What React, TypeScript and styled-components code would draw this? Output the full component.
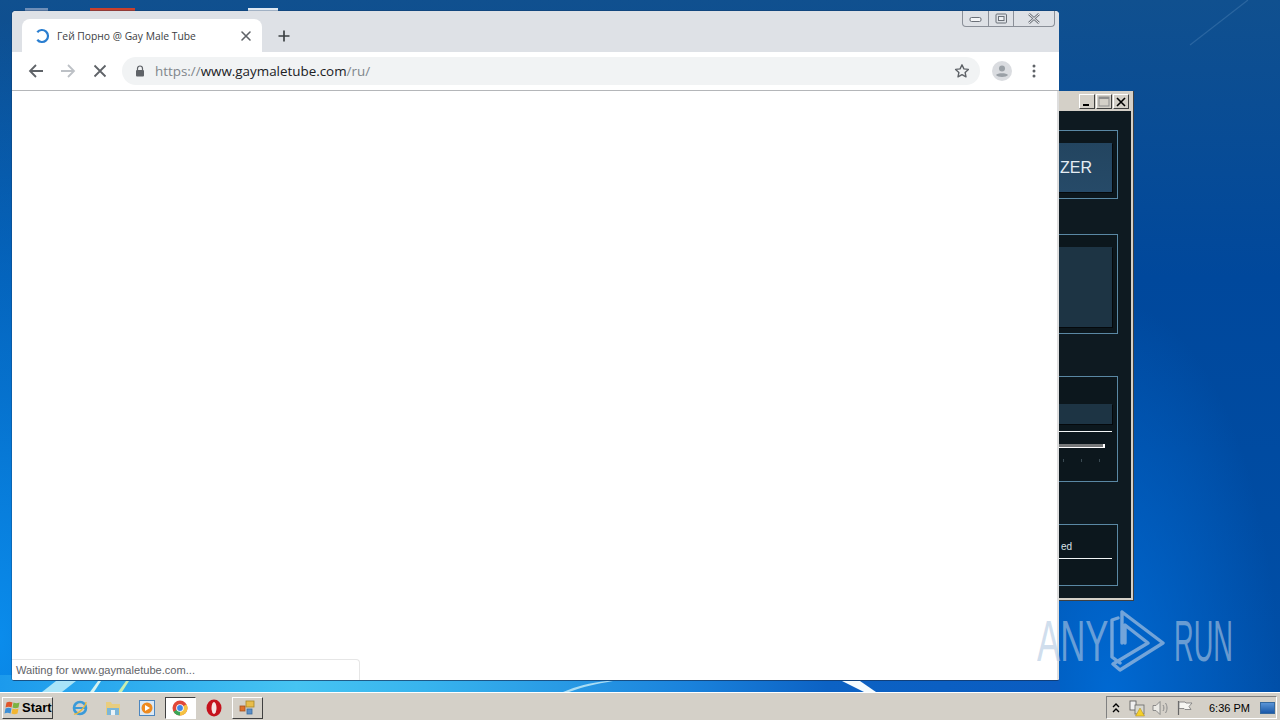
import * as React from 'react'

import styled, { createGlobalStyle } from 'styled-components'

const Global = createGlobalStyle`
  html, body {
    margin: 0;
    padding: 0;
    width: 1280px;
    height: 720px;
    overflow: hidden;
  }
  * {
    box-sizing: border-box;
  }
`

const Screen = styled.div`
  width: 1280px;
  height: 720px;
  display: flex;
  flex-direction: column;
  font-family: 'Open Sans', 'Liberation Sans', sans-serif;
`

const Desktop = styled.div`
  position: relative;
  flex: 1;
  overflow: hidden;
  background:
    radial-gradient(ellipse 170px 400px at 1110px 700px, rgba(0, 108, 215, 0.9), rgba(0, 100, 200, 0) 100%),
    radial-gradient(ellipse 260px 620px at 0 640px, #0a8cec, rgba(10, 120, 220, 0) 100%),
    linear-gradient(180deg, #10508f 0%, #00489c 40%, #004fa8 100%);
`

const Wallpaper = styled.svg`
  position: absolute;
  left: 0;
  top: 0;
`

const DesktopIconEdge = styled.div<{ $left: number; $width: number; $color: string }>`
  position: absolute;
  top: 8px;
  left: ${p => p.$left}px;
  width: ${p => p.$width}px;
  height: 4px;
  background: ${p => p.$color};
`

const ChromeWindow = styled.div`
  position: absolute;
  left: 12px;
  top: 11px;
  width: 1047px;
  height: 669px;
  display: flex;
  flex-direction: column;
  border-radius: 4px 4px 2px 2px;
  overflow: hidden;
  background: #fff;
  box-shadow: 0 1px 0 rgba(20, 50, 90, 0.7), -1px 0 0 rgba(20, 50, 90, 0.3), 0 -1px 0 rgba(20, 50, 90, 0.3);
`

const TabStrip = styled.div`
  position: relative;
  height: 41px;
  flex: none;
  display: flex;
  align-items: flex-end;
  padding-left: 10px;
  background: #dee1e6;
`

const Tab = styled.div`
  width: 240px;
  height: 33px;
  display: flex;
  align-items: center;
  gap: 7px;
  padding: 0 10px 0 12px;
  background: #fff;
  border-radius: 8px 8px 0 0;
`

const TabTitle = styled.span`
  flex: 1;
  font-size: 10.3px;
  color: #3c4043;
  white-space: nowrap;
`

const NewTab = styled.div`
  width: 44px;
  height: 33px;
  display: flex;
  align-items: center;
  justify-content: center;
`

const Caption = styled.div`
  position: absolute;
  top: 0;
  right: 4px;
  width: 93px;
  height: 16px;
  display: flex;
  border: 1px solid #8a8f98;
  border-top: none;
  border-radius: 0 0 4px 4px;
`

const CaptionButton = styled.div<{ $width: number }>`
  width: ${p => p.$width}px;
  display: flex;
  align-items: center;
  justify-content: center;
  & + & {
    border-left: 1px solid #8a8f98;
  }
`

const Toolbar = styled.div`
  height: 39px;
  flex: none;
  display: flex;
  align-items: center;
  padding: 0 8px 1px 8px;
  background: #fff;
  border-bottom: 1px solid #b4b6b9;
`

const NavButton = styled.div`
  width: 32px;
  height: 28px;
  display: flex;
  align-items: center;
  justify-content: center;
`

const Omnibox = styled.div`
  width: 858px;
  height: 28px;
  margin-left: 6px;
  display: flex;
  align-items: center;
  padding: 0 10px 0 13px;
  background: #f1f3f4;
  border-radius: 14px;
`

const Url = styled.span`
  flex: 1;
  margin-left: 10px;
  font-size: 13.4px;
  color: #80868b;
  white-space: nowrap;
`

const UrlHost = styled.span`
  color: #202124;
`

const ToolbarEnd = styled.div`
  flex: 1;
  display: flex;
  align-items: center;
  justify-content: space-between;
  padding: 0 15px 0 12px;
`

const Page = styled.div`
  position: relative;
  flex: 1;
  background: #fff;
  border-right: 2px solid #dedede;
`

const StatusBubble = styled.div`
  position: absolute;
  left: 0;
  bottom: 0;
  width: 348px;
  height: 21px;
  display: flex;
  align-items: center;
  padding-left: 4px;
  font-family: 'Liberation Sans', sans-serif;
  font-size: 11.1px;
  color: #5f6368;
  background: #fff;
  border: 1px solid #e6e6e6;
  border-left: none;
  border-bottom: none;
  border-radius: 0 4px 0 0;
`

const AppWindow = styled.div`
  position: absolute;
  left: 1040px;
  top: 91px;
  width: 94px;
  height: 510px;
  display: flex;
  flex-direction: column;
  background: #d4d0c8;
  border-right: 1px solid #404040;
  border-bottom: 1px solid #404040;
  padding: 0 2px 2px 0;
`

const AppTitle = styled.div`
  height: 20px;
  flex: none;
  display: flex;
  justify-content: flex-end;
  align-items: center;
  gap: 1px;
  padding: 1px 2px 0 0;
`

const WinButton = styled.div`
  width: 16px;
  height: 15px;
  display: flex;
  align-items: center;
  justify-content: center;
  background: #d4d0c8;
  border: 1px solid;
  border-color: #fff #404040 #404040 #fff;
`

const AppBody = styled.div`
  flex: 1;
  display: flex;
  flex-direction: column;
  align-items: flex-end;
  padding: 19px 13px 0 0;
  background: #0e1a21;
`

const Group = styled.div<{ $height: number; $gap: number }>`
  width: 90px;
  height: ${p => p.$height}px;
  flex: none;
  margin-bottom: ${p => p.$gap}px;
  display: flex;
  flex-direction: column;
  align-items: flex-end;
  padding: 12px 5px 0 0;
  border: 1px solid #5a88a4;
  background: #0c171d;
`

const AppButton = styled.div<{ $height: number }>`
  width: 90px;
  height: ${p => p.$height}px;
  flex: none;
  display: flex;
  align-items: center;
  justify-content: flex-end;
  padding-right: 20px;
  font-family: 'Liberation Sans', sans-serif;
  font-size: 16px;
  color: #e4edf3;
  background: #1d3444;
  box-shadow: 1px 1px 0 #05090c;
`

const BlueButton = styled(AppButton)`
  background: linear-gradient(180deg, #234560, #264a68);
`

const BarButton = styled(AppButton)`
  margin: 15px 0 7px;
`

const TrackGroup = styled.div`
  width: 100%;
  display: flex;
  flex-direction: column;
  align-items: flex-end;
`

const Rule = styled.div`
  width: 90px;
  height: 1px;
  background: #f2f5f6;
`

const Slider = styled.div`
  width: 82px;
  height: 4px;
  margin: 12px 7px 0 0;
  background: #77797a;
  border-right: 2px solid #fff;
  border-bottom: 1px solid #fff;
`

const Ticks = styled.div`
  width: 60px;
  display: flex;
  justify-content: flex-end;
  gap: 17px;
  margin: 11px 12px 0 0;
`

const Tick = styled.span`
  width: 1px;
  height: 3px;
  background: #3a4a52;
`

const CheckLabel = styled.div`
  width: 90px;
  height: 33px;
  display: flex;
  align-items: center;
  justify-content: flex-end;
  padding-right: 40px;
  margin-top: -12px;
  padding-top: 10px;
  font-family: 'Liberation Sans', sans-serif;
  font-size: 10px;
  color: #d8e2e8;
`

const Watermark = styled.div`
  position: absolute;
  left: 1037px;
  top: 609px;
  display: flex;
  align-items: center;
  font-family: 'Liberation Sans', sans-serif;
  font-size: 58px;
  line-height: 62px;
  color: rgba(176, 200, 226, 0.6);
`

const WatermarkWord = styled.span<{ $box: number; $scale: number; $offset?: number }>`
  display: block;
  width: ${p => p.$box}px;
  margin-left: ${p => p.$offset || 0}px;
  transform: scaleX(${p => p.$scale});
  transform-origin: left center;
  white-space: nowrap;
`

const Taskbar = styled.div`
  height: 28px;
  flex: none;
  display: flex;
  align-items: center;
  padding: 2px 0 0 2px;
  background: #d4d0c8;
  border-top: 1px solid #fff;
`

const StartButton = styled.div`
  width: 51px;
  height: 22px;
  display: flex;
  align-items: center;
  padding-left: 1px;
  font-family: 'Liberation Sans', sans-serif;
  font-size: 13px;
  font-weight: 700;
  color: #000;
  border: 1px solid;
  border-color: #fff #404040 #404040 #fff;
`

const QuickLaunch = styled.div`
  display: flex;
  align-items: center;
  margin-left: 10px;
`

const TaskIcon = styled.div<{ $active?: boolean; $boxed?: boolean }>`
  width: ${p => (p.$active || p.$boxed ? 31 : 33.5)}px;
  height: 22px;
  display: flex;
  align-items: center;
  justify-content: center;
  ${p => (p.$active || p.$boxed) && 'margin: 0 1.25px;'}
  ${p => p.$active && 'background: #fff; border: 1px solid; border-color: #404040 #fff #fff #404040;'}
  ${p => p.$boxed && 'border: 1px solid; border-color: #fff #404040 #404040 #fff;'}
`

const Tray = styled.div`
  margin-left: auto;
  margin-right: 3px;
  width: 171px;
  height: 23px;
  display: flex;
  align-items: center;
  padding-left: 0;
  border: 1px solid;
  border-color: #808080 #fff #fff #808080;
`

const TrayIcon = styled.div<{ $width: number }>`
  width: ${p => p.$width}px;
  height: 18px;
  display: flex;
  align-items: center;
  justify-content: center;
`

const Clock = styled.span`
  margin-left: 12px;
  font-family: 'Liberation Sans', sans-serif;
  font-size: 11px;
  color: #000;
  white-space: nowrap;
`

const ShowDesktop = styled.div`
  width: 15px;
  height: 12px;
  margin-left: auto;
  margin-right: 1px;
  background: linear-gradient(180deg, #5a94d6, #1a58a8);
  border: 1px solid #34689f;
`

const Stroke = { fill: 'none', strokeLinecap: 'round', strokeLinejoin: 'round' } as const

export default function App() {
  return (
    <Screen>
      <Global />
      <Desktop>
        <Wallpaper width="1280" height="692" viewBox="0 0 1280 692">
          <defs>
            <linearGradient id="glow" x1="0" x2="1" y1="0" y2="0">
              <stop offset="0" stopColor="#1c9aec" />
              <stop offset="0.28" stopColor="#46c4f2" />
              <stop offset="0.4" stopColor="#38b4ee" />
              <stop offset="0.65" stopColor="#1a82dc" />
              <stop offset="0.78" stopColor="#0c62c4" />
              <stop offset="1" stopColor="#0a5cc0" />
            </linearGradient>
          </defs>
          <rect x="0" y="675" width="1060" height="17" fill="url(#glow)" />
          <path d="M42 692l14-11h20l-14 11z" fill="#a8e4f8" />
          <path d="M90 692l8-11h3l-7 11z" fill="#d4f2f0" />
          <path d="M118 692l8-11h3l-7 11z" fill="#c8eeb0" />
          <path d="M563 692c14-6 26-9 44-11h6c-18 3-30 6-44 11z" fill="#a8dcf4" />
          <path d="M842 681h18l16 11h-12z" fill="#f4fbfe" />
          <path d="M1248 0L1190 45" stroke="rgba(150,190,225,0.2)" strokeWidth="1.2" fill="none" />
        </Wallpaper>
        <DesktopIconEdge $left={25} $width={23} $color="#6f8fb8" />
        <DesktopIconEdge $left={90} $width={45} $color="#c8402c" />
        <DesktopIconEdge $left={248} $width={30} $color="#dfe8f2" />

        <AppWindow>
          <AppTitle>
            <WinButton>
              <svg width="10" height="10" viewBox="0 0 10 10">
                <rect x="1" y="7" width="6" height="2" fill="#000" />
              </svg>
            </WinButton>
            <WinButton>
              <svg width="12" height="11" viewBox="0 0 12 11">
                <rect x="1" y="1" width="10" height="9" fill="none" stroke="#8d8d8d" strokeWidth="1" />
                <rect x="1" y="1" width="10" height="2" fill="#8d8d8d" />
              </svg>
            </WinButton>
            <WinButton>
              <svg width="10" height="10" viewBox="0 0 10 10">
                <path d="M1 1l8 8M9 1l-8 8" stroke="#000" strokeWidth="1.6" fill="none" />
              </svg>
            </WinButton>
          </AppTitle>
          <AppBody>
            <Group $height={69} $gap={35}>
              <BlueButton $height={49}>ZER</BlueButton>
            </Group>
            <Group $height={100} $gap={42}>
              <AppButton $height={80} />
            </Group>
            <Group $height={106} $gap={42}>
              <TrackGroup>
                <BarButton $height={20} />
                <Rule />
                <Slider />
                <Ticks>
                  <Tick />
                  <Tick />
                  <Tick />
                </Ticks>
              </TrackGroup>
            </Group>
            <Group $height={62} $gap={0}>
              <CheckLabel>ed</CheckLabel>
              <Rule />
            </Group>
          </AppBody>
        </AppWindow>

        <ChromeWindow>
          <TabStrip>
            <Tab>
              <svg width="16" height="16" viewBox="0 0 16 16">
                <path d="M3.300 4.300A6 6 0 1 1 3.300 11.700" stroke="#2a7ed0" strokeWidth="2.200" fill="none" />
              </svg>
              <TabTitle>Гей Порно @ Gay Male Tube</TabTitle>
              <svg width="12" height="12" viewBox="0 0 12 12">
                <path d="M2 2l8 8M10 2l-8 8" stroke="#5f6368" strokeWidth="1.6" {...Stroke} />
              </svg>
            </Tab>
            <NewTab>
              <svg width="14" height="14" viewBox="0 0 14 14">
                <path d="M7 1.500v11M1.500 7h11" stroke="#3c4043" strokeWidth="1.7" fill="none" />
              </svg>
            </NewTab>
            <Caption>
              <CaptionButton $width={25}>
                <svg width="14" height="8" viewBox="0 0 14 8">
                  <rect x="1" y="2.500" width="11" height="4" rx="1.500" fill="#f4f5f7" stroke="#6b7078" strokeWidth="1" />
                </svg>
              </CaptionButton>
              <CaptionButton $width={25}>
                <svg width="13" height="11" viewBox="0 0 13 11">
                  <rect x="1" y="1" width="10.500" height="9" rx="1" fill="none" stroke="#6b7078" strokeWidth="1" />
                  <rect x="3.500" y="3.500" width="5.500" height="4" fill="#eef0f2" stroke="#6b7078" strokeWidth="1" />
                </svg>
              </CaptionButton>
              <CaptionButton $width={41}>
                <svg width="14" height="11" viewBox="0 0 14 11">
                  <path d="M2 1l10 9M12 1L2 10" stroke="#6b7078" strokeWidth="2.400" fill="none" />
                  <path d="M2 1l10 9M12 1L2 10" stroke="#f4f5f7" strokeWidth="1" fill="none" />
                </svg>
              </CaptionButton>
            </Caption>
          </TabStrip>

          <Toolbar>
            <NavButton>
              <svg width="16" height="16" viewBox="0 0 16 16">
                <path d="M15 8H2M8 2L2 8l6 6" stroke="#5f6368" strokeWidth="1.8" fill="none" />
              </svg>
            </NavButton>
            <NavButton>
              <svg width="16" height="16" viewBox="0 0 16 16">
                <path d="M1 8h13M8 2l6 6-6 6" stroke="#bdc1c6" strokeWidth="1.8" fill="none" />
              </svg>
            </NavButton>
            <NavButton>
              <svg width="14" height="14" viewBox="0 0 14 14">
                <path d="M1.500 1.500l11 11M12.500 1.500l-11 11" stroke="#5f6368" strokeWidth="1.8" fill="none" />
              </svg>
            </NavButton>
            <Omnibox>
              <svg width="10" height="12" viewBox="0 0 10 12">
                <path d="M2.500 5V3.500a2.500 2.500 0 0 1 5 0V5" stroke="#5f6368" strokeWidth="1.2" fill="none" />
                <rect x="1" y="5" width="8" height="6.500" rx="1" fill="#5f6368" />
              </svg>
              <Url>
                https://<UrlHost>www.gaymaletube.com</UrlHost>/ru/
              </Url>
              <svg width="16" height="16" viewBox="0 0 16 16">
                <path
                  d="M8 1.800l1.900 4.100 4.500.5-3.300 3 .9 4.400L8 11.600l-4 2.200.9-4.400-3.300-3 4.500-.5z"
                  stroke="#5f6368"
                  strokeWidth="1.4"
                  fill="none"
                  strokeLinejoin="round"
                />
              </svg>
            </Omnibox>
            <ToolbarEnd>
              <svg width="20" height="20" viewBox="0 0 20 20">
                <circle cx="10" cy="10" r="10" fill="#dadce0" />
                <circle cx="10" cy="7.500" r="3" fill="#9aa0a6" />
                <path d="M4 14c1.500-2.400 10.500-2.400 12 0-1.500 2.600-10.500 2.600-12 0z" fill="#9aa0a6" />
              </svg>
              <svg width="4" height="14" viewBox="0 0 4 14">
                <circle cx="2" cy="2" r="1.500" fill="#5f6368" />
                <circle cx="2" cy="7" r="1.500" fill="#5f6368" />
                <circle cx="2" cy="12" r="1.500" fill="#5f6368" />
              </svg>
            </ToolbarEnd>
          </Toolbar>

          <Page>
            <StatusBubble>Waiting for www.gaymaletube.com...</StatusBubble>
          </Page>
        </ChromeWindow>

        <Watermark>
          <WatermarkWord $box={71} $scale={0.6}>
            ANY
          </WatermarkWord>
          <svg width="58" height="63" viewBox="0 0 58 63">
            <path
              d="M10 9L4 11V48L12 54M14 3V34M14 3L55 34L12 61L5 55L40 34L17 16V34"
              stroke="rgba(176,200,226,0.65)"
              strokeWidth="3.4"
              fill="none"
              strokeLinejoin="round"
              strokeLinecap="round"
            />
          </svg>
          <WatermarkWord $box={60} $scale={0.47} $offset={8}>
            RUN
          </WatermarkWord>
        </Watermark>
      </Desktop>

      <Taskbar>
        <StartButton>
          <svg width="18" height="17" viewBox="0 0 17 17">
            <path d="M2 3.500c2-1 4-1 6 0l-1 5c-2-1-4-1-6 0z" fill="#e0562a" />
            <path d="M9 3.500c2 1 4 1 6 0l-1 5c-2 1-4 1-6 0z" fill="#7cb342" />
            <path d="M1 9.500c2-1 4-1 6 0l-1 5c-2-1-4-1-6 0z" fill="#3d8fd6" />
            <path d="M8 9.500c2 1 4 1 6 0l-1 5c-2 1-4 1-6 0z" fill="#f2b632" />
          </svg>
          Start
        </StartButton>
        <QuickLaunch>
          <TaskIcon>
            <svg width="18" height="18" viewBox="0 0 18 18">
              <circle cx="9" cy="9" r="6" fill="none" stroke="#3a9ad9" strokeWidth="2.600" />
              <path d="M3 9h12" stroke="#3a9ad9" strokeWidth="2" />
              <path d="M3 15C6 16 15 8 15 3" stroke="#e8b93a" strokeWidth="1.400" fill="none" />
            </svg>
          </TaskIcon>
          <TaskIcon>
            <svg width="18" height="18" viewBox="0 0 18 18">
              <path d="M2 3h5l1 2h8v11H2z" fill="#e9cd7e" />
              <rect x="3" y="9" width="12" height="7" fill="#7cb6d8" />
              <rect x="7" y="11" width="4" height="5" fill="#e9f3f8" />
            </svg>
          </TaskIcon>
          <TaskIcon>
            <svg width="16" height="16" viewBox="0 0 16 16">
              <rect x="0.500" y="0.500" width="15" height="15" fill="#dce9f5" stroke="#4c86bf" />
              <circle cx="8" cy="8" r="5.500" fill="#ee8a1f" />
              <path d="M6 5l5 3-5 3z" fill="#fff" />
            </svg>
          </TaskIcon>
          <TaskIcon $active>
            <svg width="16" height="16" viewBox="0 0 16 16">
              <circle cx="8" cy="8" r="7.500" fill="#e0483a" />
              <path d="M8 8L1.500 11.800A7.500 7.500 0 0 0 8 15.500z" fill="#3aa757" />
              <path d="M8 8l6.500-3.800A7.500 7.500 0 0 1 8 15.500z" fill="#f5c242" />
              <circle cx="8" cy="8" r="3.800" fill="#fff" />
              <circle cx="8" cy="8" r="2.900" fill="#3f86e8" />
            </svg>
          </TaskIcon>
          <TaskIcon>
            <svg width="16" height="18" viewBox="0 0 16 18">
              <ellipse cx="8" cy="9" rx="7.500" ry="8.500" fill="#c5111c" />
              <ellipse cx="8" cy="9" rx="2.500" ry="6" fill="#f6e3e3" />
            </svg>
          </TaskIcon>
          <TaskIcon $boxed>
            <svg width="17" height="15" viewBox="0 0 17 15">
              <rect x="7" y="1" width="8" height="6" fill="#e8bd4a" stroke="#a98524" strokeWidth="0.800" />
              <rect x="1" y="6" width="5" height="5" fill="#e0702c" stroke="#a6501e" strokeWidth="0.800" />
              <rect x="8" y="9" width="5" height="5" fill="#5c8fc7" stroke="#376a9f" strokeWidth="0.800" />
            </svg>
          </TaskIcon>
        </QuickLaunch>
        <Tray>
          <TrayIcon $width={18}>
            <svg width="8" height="10" viewBox="0 0 8 10">
              <path d="M1 4l3-3 3 3M1 9l3-3 3 3" stroke="#000" strokeWidth="1.400" fill="none" />
            </svg>
          </TrayIcon>
          <TrayIcon $width={24}>
            <svg width="18" height="18" viewBox="0 0 18 18">
              <rect x="2" y="2" width="6" height="9" fill="#f0f0f0" stroke="#555" strokeWidth="0.800" />
              <rect x="7" y="6" width="9" height="9" fill="#d8d8d0" stroke="#666" strokeWidth="0.800" />
              <path d="M12 9l4.500 8h-9z" fill="#f4cf2a" stroke="#a98524" strokeWidth="0.500" />
            </svg>
          </TrayIcon>
          <TrayIcon $width={24}>
            <svg width="18" height="16" viewBox="0 0 18 16">
              <path d="M1 5.500h3l4-4v13l-4-4H1z" fill="#ecebe6" stroke="#777" strokeWidth="0.800" />
              <path d="M11 5c1.200 1.800 1.200 4.200 0 6M13.500 3c2 3 2 7 0 10" stroke="#8a8a8a" strokeWidth="1" fill="none" />
            </svg>
          </TrayIcon>
          <TrayIcon $width={24}>
            <svg width="18" height="16" viewBox="0 0 18 16">
              <path d="M2.500 1v14" stroke="#666" strokeWidth="1.200" />
              <path d="M3 2h6l1 1h6l-3 3.500 2 3H9l-1-1H3z" fill="#f6f6f2" stroke="#777" strokeWidth="0.800" />
            </svg>
          </TrayIcon>
          <Clock>6:36 PM</Clock>
          <ShowDesktop />
        </Tray>
      </Taskbar>
    </Screen>
  )
}
